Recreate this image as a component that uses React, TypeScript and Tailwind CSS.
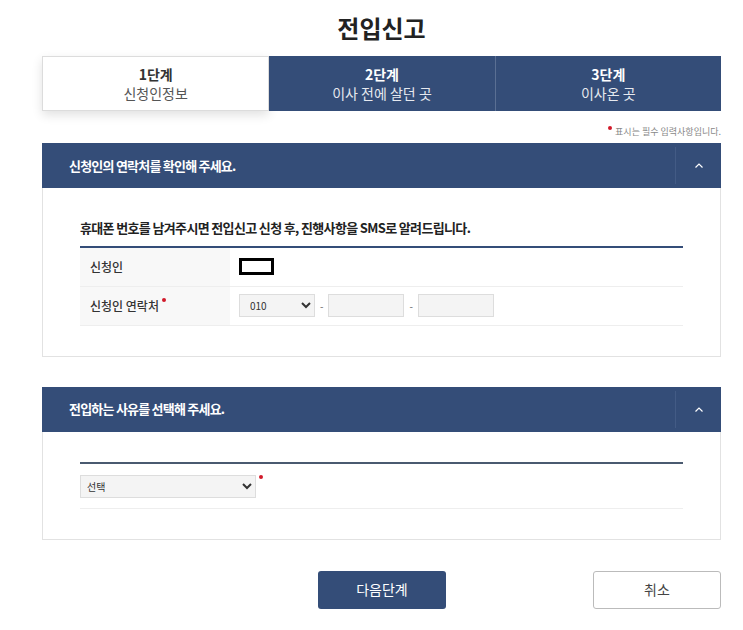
import React, { useState } from "react";

const font = { fontFamily: '"Noto Sans CJK KR", "Noto Sans", sans-serif' };

// step tabs
const steps = [
  { no: "1단계", name: "신청인정보" },
  { no: "2단계", name: "이사 전에 살던 곳" },
  { no: "3단계", name: "이사온 곳" },
];

const Chevron: React.FC = () => (
  <svg width="10" height="7" viewBox="0 0 10 7" fill="none">
    <path d="M1.5 5.5 L5 2 L8.5 5.5" stroke="#ffffff" strokeWidth="1.2" />
  </svg>
);

const SectionHeader: React.FC<{ title: string }> = ({ title }) => (
  <div className="flex h-[45px] items-center bg-[#344d78]">
    <p className="flex-1 pl-[27px] text-[13px] font-bold tracking-[-0.06em] text-white">{title}</p>
    <div className="flex h-[37px] w-[46px] items-center justify-center border-l border-[#435b85]">
      <Chevron />
    </div>
  </div>
);

const App: React.FC = () => {
  const [reason, setReason] = useState<string>("");

  return (
    <main className="min-h-[630px] bg-white pl-[42px] text-[#333]" style={font}>
      <div className="w-[679px]">
        <h1 className="pt-[12px] text-center text-[24px] font-bold leading-[32px] text-[#222]">전입신고</h1>

        {/* Steps */}
        <div className="mt-[12px] flex h-[55px]">
          {steps.map((s, i) => (
            <div
              key={s.no}
              className={
                i === 0
                  ? "flex flex-1 flex-col items-center justify-center border border-[#dcdcdc] bg-white shadow-[0_4px_10px_rgba(0,0,0,0.12)]"
                  : i === 1
                  ? "flex flex-1 flex-col items-center justify-center border-r border-[#5a6f93] bg-[#344d78] text-white"
                  : "flex flex-1 flex-col items-center justify-center bg-[#344d78] text-white"
              }
            >
              <span className={i === 0 ? "text-[14px] font-bold leading-[18px] text-[#333]" : "text-[14px] font-bold leading-[18px]"}>{s.no}</span>
              <span className={i === 0 ? "text-[14px] leading-[20px] text-[#555]" : "text-[14px] leading-[20px] text-[#e6e9ef]"}>{s.name}</span>
            </div>
          ))}
        </div>

        <p className="mt-[14px] flex items-start justify-end text-[9px] leading-[14px] text-[#888]">
          <span className="mr-[3px] mt-[1px] h-[4px] w-[4px] rounded-full bg-[#d11a2a]" />
          표시는 필수 입력사항입니다.
        </p>

        {/* Section 1 */}
        <section className="mt-[4px]">
          <SectionHeader title="신청인의 연락처를 확인해 주세요." />
          <div className="border border-t-0 border-[#e2e2e2] px-[37px] pb-[30px] pt-[30px]">
            <p className="pb-[8px] text-[13px] font-bold tracking-[-0.05em] text-[#222]">
              휴대폰 번호를 남겨주시면 전입신고 신청 후, 진행사항을 SMS로 알려드립니다.
            </p>
            <div className="border-t-2 border-[#344d78]">
              <div className="flex h-[39px] border-b border-[#eeeeee]">
                <div className="flex w-[150px] items-center bg-[#f8f8f8] pl-[10px] text-[12px] font-medium">신청인</div>
                <div className="flex items-center pl-[9px]">
                  <div className="h-[17px] w-[35px] border-[3px] border-black" />
                </div>
              </div>
              <div className="flex h-[39px] border-b border-[#eeeeee]">
                <div className="flex w-[150px] items-center bg-[#f8f8f8] pl-[10px] text-[12px] font-medium">
                  신청인 연락처
                  <span className="mb-[12px] ml-[3px] h-[4px] w-[4px] rounded-full bg-[#d11a2a]" />
                </div>
                <div className="flex items-center pl-[9px] text-[10px] text-[#666]">
                  <select className="h-[23px] w-[76px] border border-[#dddddd] bg-[#f4f4f4] pl-[6px] text-[10px] text-[#333]" defaultValue="010">
                    <option value="010">010</option>
                    <option value="011">011</option>
                    <option value="016">016</option>
                  </select>
                  <span className="mx-[5px]">-</span>
                  <input className="h-[23px] w-[76px] border border-[#dddddd] bg-[#f4f4f4]" />
                  <span className="mx-[5px]">-</span>
                  <input className="h-[23px] w-[76px] border border-[#dddddd] bg-[#f4f4f4]" />
                </div>
              </div>
            </div>
          </div>
        </section>

        {/* Section 2 */}
        <section className="mt-[30px]">
          <SectionHeader title="전입하는 사유를 선택해 주세요." />
          <div className="border border-t-0 border-[#e2e2e2] px-[37px] pb-[30px] pt-[30px]">
            <div className="border-t-2 border-[#4a5a70]">
              <div className="flex h-[45px] items-center border-b border-[#eeeeee] pt-[1px]">
                <select
                  value={reason}
                  onChange={(e) => setReason(e.target.value)}
                  className="h-[23px] w-[176px] border border-[#dddddd] bg-[#f4f4f4] pl-[2px] text-[10px] text-[#333]"
                >
                  <option value="">선택</option>
                  <option value="job">직업</option>
                  <option value="family">가족</option>
                  <option value="house">주택</option>
                </select>
                <span className="mb-[18px] ml-[3px] h-[4px] w-[4px] rounded-full bg-[#d11a2a]" />
              </div>
            </div>
          </div>
        </section>

        {/* Buttons */}
        <div className="mt-[31px] flex items-center">
          <button className="ml-[276px] h-[38px] w-[128px] rounded-[3px] bg-[#344d78] text-[14px] text-white">다음단계</button>
          <button className="ml-auto h-[38px] w-[128px] rounded-[3px] border border-[#bbbbbb] bg-white text-[14px] text-[#444]">취소</button>
        </div>
      </div>
    </main>
  );
};

export default App;
